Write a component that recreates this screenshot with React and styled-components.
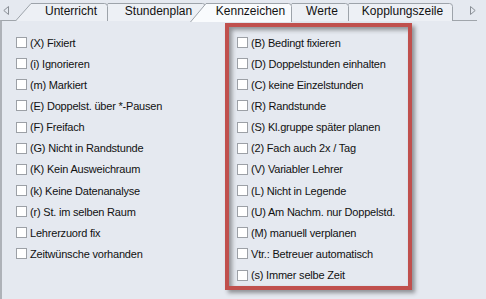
import React from 'react'
import styled, { createGlobalStyle } from 'styled-components'

const GlobalStyle = createGlobalStyle`
  html, body {
    margin: 0;
    padding: 0;
    background: #e5e9f0;
  }
  body {
    font-family: "Liberation Sans", Arial, sans-serif;
    color: #111111;
  }
`

const tabs = [
  { label: 'Unterricht', width: 93 },
  { label: 'Stundenplan', width: 114 },
  { label: 'Kennzeichen', width: 102, active: true },
  { label: 'Werte', width: 73 },
  { label: 'Kopplungszeile', width: 120 },
]

const leftItems = [
  '(X) Fixiert',
  '(i) Ignorieren',
  '(m) Markiert',
  '(E) Doppelst. über *-Pausen',
  '(F) Freifach',
  '(G) Nicht in Randstunde',
  '(K) Kein Ausweichraum',
  '(k) Keine Datenanalyse',
  '(r) St. im selben Raum',
  'Lehrerzuord fix',
  'Zeitwünsche vorhanden',
]

const rightItems = [
  '(B) Bedingt fixieren',
  '(D) Doppelstunden einhalten',
  '(C) keine Einzelstunden',
  '(R) Randstunde',
  '(S) Kl.gruppe später planen',
  '(2) Fach auch 2x / Tag',
  '(V) Variabler Lehrer',
  '(L) Nicht in Legende',
  '(U) Am Nachm. nur Doppelstd.',
  '(M) manuell verplanen',
  'Vtr.: Betreuer automatisch',
  '(s) Immer selbe Zeit',
]

const SLANT = 16

const TabShape = ({ width, active }) => {
  const h = active ? 19 : 18
  const d = `M0.5,${h} L${SLANT},0.5 L${width - 3.5},0.5 Q${width - 0.5},0.5 ${width - 0.5},3.5 L${width - 0.5},${h}`
  return (
    <ShapeSvg width={width} height={h} viewBox={`0 0 ${width} ${h}`}>
      <path d={d} fill={active ? '#f9fbfd' : '#edf0f5'} stroke="#9da3aa" strokeWidth="1" />
    </ShapeSvg>
  )
}

const Arrow = ({ dir }) => (
  <ArrowSvg width="6" height="9" viewBox="0 0 6 9">
    {dir === 'left'
      ? <path d="M5.5,0.5 L0.8,4.5 L5.5,8.5 Z" fill="none" stroke="#8a8f96" />
      : <path d="M0.5,0.5 L5.2,4.5 L0.5,8.5 Z" fill="none" stroke="#8a8f96" />}
  </ArrowSvg>
)

const Row = ({ label }) => (
  <Item>
    <Box />
    <Label>{label}</Label>
  </Item>
)

const App = () => {
  return (
    <Frame>
      <GlobalStyle />
      <TabStrip>
        <ArrowSlot><Arrow dir="left" /></ArrowSlot>
        <Tabs>
          {tabs.map((t, i) => (
            <Tab key={t.label} $width={t.width} $first={i === 0} $active={t.active} $z={t.active ? 10 : 8 - i}>
              <TabShape width={t.width} active={t.active} />
              <TabText>{t.label}</TabText>
            </Tab>
          ))}
        </Tabs>
        <RightArrowSlot><Arrow dir="right" /></RightArrowSlot>
      </TabStrip>
      <Panel>
        <LeftColumn>
          {leftItems.map(l => <Row key={l} label={l} />)}
        </LeftColumn>
        <HighlightColumn>
          {rightItems.map(l => <Row key={l} label={l} />)}
        </HighlightColumn>
      </Panel>
    </Frame>
  )
}

export default App

const Frame = styled.div`
  width: 486px;
  height: 299px;
  overflow: hidden;
  background: #e5e9f0;
`

const TabStrip = styled.div`
  display: flex;
  align-items: flex-end;
  height: 20px;
  width: 477px;
  position: relative;
`

const ArrowSlot = styled.div`
  width: 15px;
  height: 20px;
  display: flex;
  align-items: flex-start;
  padding-top: 6px;
  padding-left: 3px;
  box-sizing: border-box;
`

const RightArrowSlot = styled(ArrowSlot)`
  width: auto;
  margin-left: auto;
  padding-left: 0;
  padding-right: 1px;
`

const ArrowSvg = styled.svg`
  display: block;
`

const Tabs = styled.div`
  display: flex;
  align-items: flex-end;
  height: 20px;
`

const Tab = styled.div`
  position: relative;
  z-index: ${({ $z }) => $z};
  width: ${({ $width }) => $width}px;
  height: ${({ $active }) => ($active ? 18 : 17)}px;
  margin-left: ${({ $first }) => ($first ? 0 : -SLANT)}px;
  margin-bottom: ${({ $active }) => ($active ? -1 : 0)}px;
  align-self: flex-start;
  margin-top: 3px;
  display: flex;
  align-items: flex-start;
  justify-content: center;
  padding-left: ${SLANT + 3}px;
  box-sizing: border-box;
`

const ShapeSvg = styled.svg`
  position: absolute;
  left: 0;
  top: 0;
  display: block;
`

const TabText = styled.span`
  position: relative;
  font-size: 12px;
  line-height: 17px;
  color: #111111;
  white-space: nowrap;
`

const Panel = styled.div`
  display: grid;
  grid-template-columns: 223px 187px;
  align-items: start;
  width: 477px;
  height: 279px;
  box-sizing: border-box;
  border-top: 1px solid #a0a5ab;
  border-left: 2px solid #aeb2b8;
  padding-top: 2px;
`

const LeftColumn = styled.div`
  display: flex;
  flex-direction: column;
  padding-top: 9px;
  padding-left: 14px;
`

const HighlightColumn = styled.div`
  display: flex;
  flex-direction: column;
  border: 4px solid #c0504d;
  padding: 5px 0 0 8px;
  box-shadow: 3px 3px 4px rgba(40, 40, 40, 0.45), inset 3px 3px 4px rgba(40, 40, 40, 0.45);
`

const Item = styled.div`
  display: flex;
  align-items: center;
  gap: 3px;
  height: 21.15px;
`

const Box = styled.span`
  width: 11px;
  height: 11px;
  box-sizing: border-box;
  border: 1px solid #9ca0a6;
  background: #ffffff;
  flex: none;
`

const Label = styled.span`
  font-size: 11px;
  letter-spacing: -0.2px;
  white-space: nowrap;
  color: #111111;
`
